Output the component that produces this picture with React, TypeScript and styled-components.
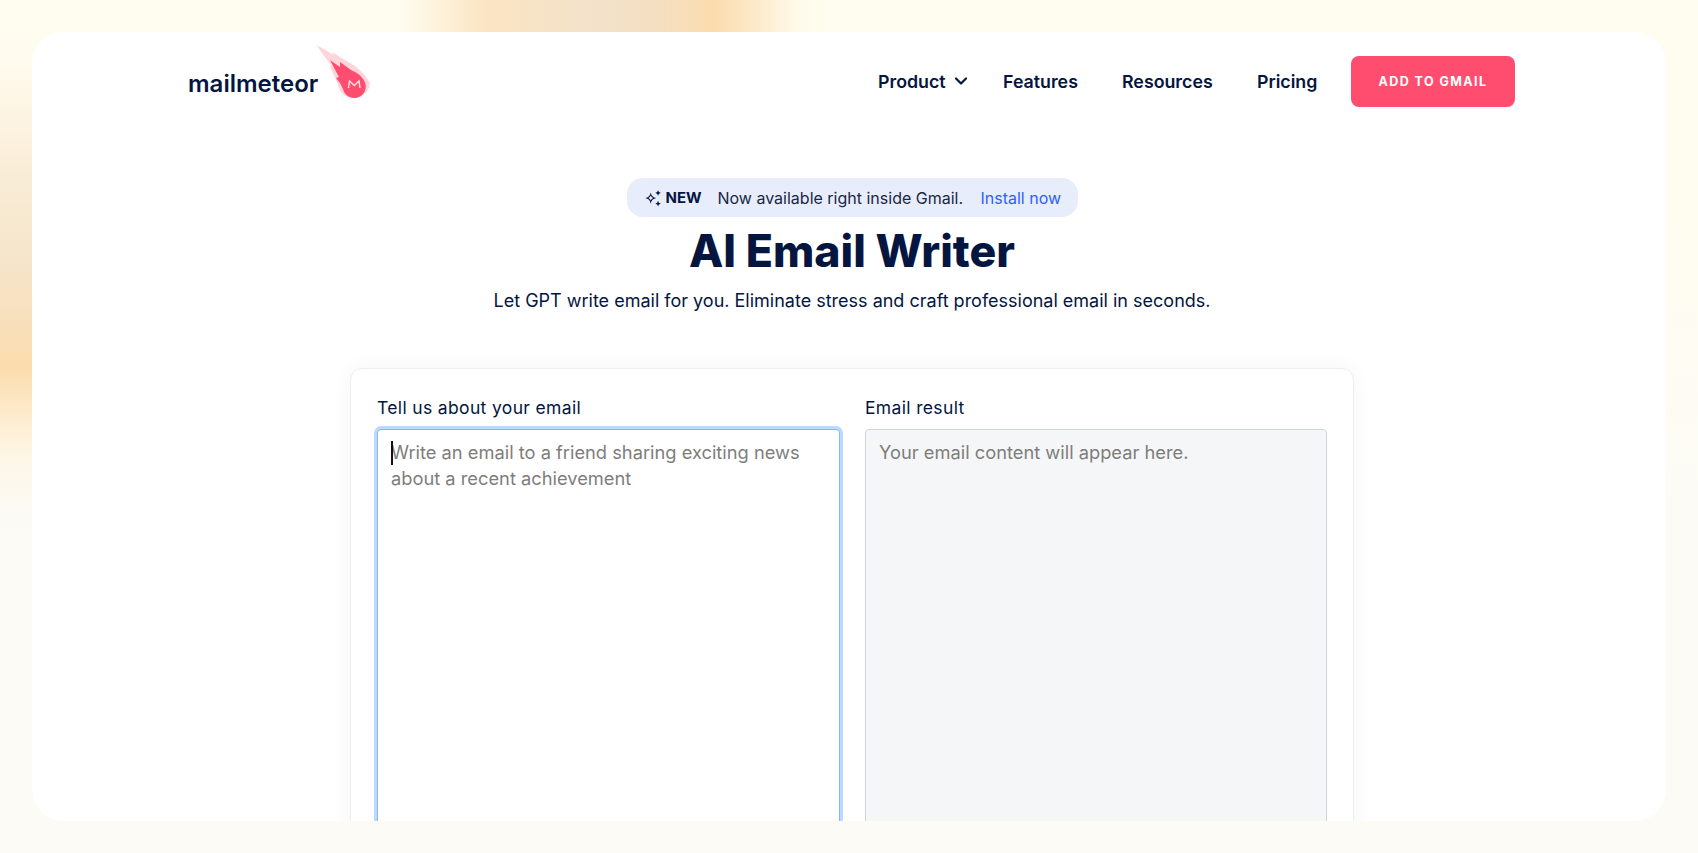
import React from "react";
import styled, { createGlobalStyle } from "styled-components";
import { ChevronDown } from "lucide-react";

const Global = createGlobalStyle`
  html, body { margin: 0; padding: 0; height: 100%; overflow: hidden; }
  body { font-family: Inter, "Liberation Sans", sans-serif; color: #041640; }
  * { box-sizing: border-box; }
`;

const Page = styled.div`
  height: 853px;
  padding: 32px;
  background-color: #fcfbf6;
  background-image:
    linear-gradient(90deg, rgba(255, 253, 240, 0) 397px, #fdf3dd 437px, #fbe4c2 487px, #f2e2ca 597px, #f5dec0 663px, #fbdcae 713px, #fdeacb 757px, #fffaea 797px, rgba(255, 253, 240, 0) 830px),
    linear-gradient(180deg, #fffdf0 32px, #fffbee 60px, #fcf3e1 127px, #f9ecd6 177px, #f5e5cb 260px, #f8dfba 327px, #fbdcae 367px, #fdeacc 413px, #fdf6e6 453px, #fcfaf4 510px, rgba(252, 251, 246, 0) 540px),
    linear-gradient(180deg, #fffdf0 0%, #fffdf0 25%, #fcfbf6 60%);
  background-size: 100% 32px, 32px 100%, 100% 100%;
  background-repeat: no-repeat;
`;

const Card = styled.div`
  height: 789px;
  background: #fff;
  border-radius: 32px;
  overflow: hidden;
`;

const Header = styled.header`
  display: flex;
  align-items: center;
  justify-content: space-between;
  padding: 20px 151px 0 156px;
  height: 78px;
`;

const Logo = styled.div`
  display: flex;
  align-items: flex-start;
  margin-bottom: 16px;
`;

const LogoText = styled.span`
  font-size: 24px;
  font-weight: 600;
  margin-top: 26px;
  line-height: 26px;
  width: 128px;
  white-space: nowrap;
`;

const Nav = styled.nav`
  display: flex;
  align-items: center;
`;

const NavLink = styled.a<{ $w: number }>`
  display: flex;
  align-items: center;
  width: ${(p) => p.$w}px;
  font-size: 17.8px;
  font-weight: 600;
  color: #041640;
  white-space: nowrap;
`;

const Cta = styled.button`
  width: 164px;
  height: 51px;
  border: 0;
  border-radius: 8px;
  background: #ff4d6f;
  color: #fff;
  font: 700 12.5px Inter, sans-serif;
  letter-spacing: 1.45px;
`;

const Main = styled.main`
  padding-left: 6px;
`;

const Hero = styled.section`
  display: flex;
  flex-direction: column;
  align-items: center;
  padding-top: 68px;
`;

const Badge = styled.div`
  display: flex;
  align-items: center;
  width: 451px;
  height: 39px;
  padding-left: 17px;
  border-radius: 16px;
  background: #e8edfb;
  font-size: 16px;
`;

const NewLabel = styled.b`
  font-weight: 700;
  font-size: 15px;
  margin-left: 4px;
  width: 52px;
`;

const BadgeText = styled.span`
  width: 263px;
  color: #1a2744;
  white-space: nowrap;
`;

const BadgeLink = styled.a`
  color: #2f5dff;
  white-space: nowrap;
`;

const Title = styled.h1`
  margin: 4px 0 0;
  font-size: 44.6px;
  line-height: 60px;
  font-weight: 800;
  color: #041640;
`;

const Subtitle = styled.p`
  margin: 7px 0 0;
  font-size: 18px;
  line-height: 26px;
  color: #041640;
`;

const Panel = styled.section`
  width: 1004px;
  height: 600px;
  margin: 54px auto 0;
  padding: 27px 26px 0 26px;
  background: #fff;
  border: 1px solid #eceef1;
  border-radius: 12px;
  box-shadow: 0 0 24px rgba(20, 60, 80, 0.04);
  display: grid;
  grid-template-columns: 463px 462px;
  column-gap: 25px;
`;

const Column = styled.div`
  display: flex;
  flex-direction: column;
`;

const Label = styled.label`
  font-size: 17.5px;
  letter-spacing: 0.35px;
  line-height: 24px;
  height: 33px;
  color: #041640;
  white-space: nowrap;
`;

const Field = styled.div<{ $active?: boolean }>`
  height: 500px;
  padding: 9px 13px;
  font-size: 18.3px;
  line-height: 26px;
  color: #7f7d7b;
  border-radius: 4px;
  position: relative;
  background: ${(p) => (p.$active ? "#fff" : "#f5f6f8")};
  border: 1px solid ${(p) => (p.$active ? "#86b7fe" : "#ced4da")};
  box-shadow: ${(p) => (p.$active ? "0 0 0 3px #bcd9fe" : "none")};
`;

const Caret = styled.i`
  position: absolute;
  left: 13px;
  top: 11px;
  width: 1.5px;
  height: 24px;
  background: #111;
`;

export default function App() {
  return (
    <Page>
      <Global />
      <Card>
        <Header>
          <Logo>
            <LogoText>mailmeteor</LogoText>
            <svg width="56" height="56" viewBox="0 0 56 56">
              <path d="M0.700 0 L18 10 L15.700 6.700 L29 15 Q47 24 54 38 A16.500 16.500 0 0 1 24 46 Q20 33 13 20 L17 22 Q10 15 0.700 0 Z" fill="#ffd5dc" />
              <path d="M14 15 L24 22 L24 17 L35 25 Q47 30 49.500 39 A11.500 11.500 0 0 1 27 44 Q24 37 20 33 L23 32 Q18 23 14 15 Z" fill="#ff4d6f" />
              <path d="M32.500 43 L33.500 36 L38.300 40.500 L43 36 L44 43" fill="none" stroke="#ffe3e8" strokeWidth="1.4" />
            </svg>
          </Logo>
          <Nav>
            <NavLink $w={125}>Product<ChevronDown size={20} strokeWidth={2.6} style={{ marginLeft: 5 }} /></NavLink>
            <NavLink $w={119}>Features</NavLink>
            <NavLink $w={135}>Resources</NavLink>
            <NavLink $w={94}>Pricing</NavLink>
            <Cta>ADD TO GMAIL</Cta>
          </Nav>
        </Header>
        <Main>
          <Hero>
            <Badge>
              <svg width="18" height="18" viewBox="0 0 16 16" fill="#041640">
                <path d="M6 3 C6.500 6 8 7.500 11 8 C8 8.500 6.500 10 6 13 C5.500 10 4 8.500 1 8 C4 7.500 5.500 6 6 3 Z M6 5.800 C5.600 6.900 4.900 7.600 3.800 8 C4.900 8.400 5.600 9.100 6 10.200 C6.400 9.100 7.100 8.400 8.200 8 C7.100 7.600 6.400 6.900 6 5.800 Z" fillRule="evenodd" />
                <path d="M12.500 1 L13.300 2.700 L15 3.500 L13.300 4.300 L12.500 6 L11.700 4.300 L10 3.500 L11.700 2.700 Z" />
                <path d="M12.500 10.500 L13.200 12.300 L15 13 L13.200 13.700 L12.500 15.500 L11.800 13.700 L10 13 L11.800 12.300 Z" />
              </svg>
              <NewLabel>NEW</NewLabel>
              <BadgeText>Now available right inside Gmail.</BadgeText>
              <BadgeLink>Install now</BadgeLink>
            </Badge>
            <Title>AI Email Writer</Title>
            <Subtitle>Let GPT write email for you. Eliminate stress and craft professional email in seconds.</Subtitle>
          </Hero>
          <Panel>
            <Column>
              <Label>Tell us about your email</Label>
              <Field $active>
                <Caret />
                Write an email to a friend sharing exciting news about a recent achievement
              </Field>
            </Column>
            <Column>
              <Label>Email result</Label>
              <Field>Your email content will appear here.</Field>
            </Column>
          </Panel>
        </Main>
      </Card>
    </Page>
  );
}
